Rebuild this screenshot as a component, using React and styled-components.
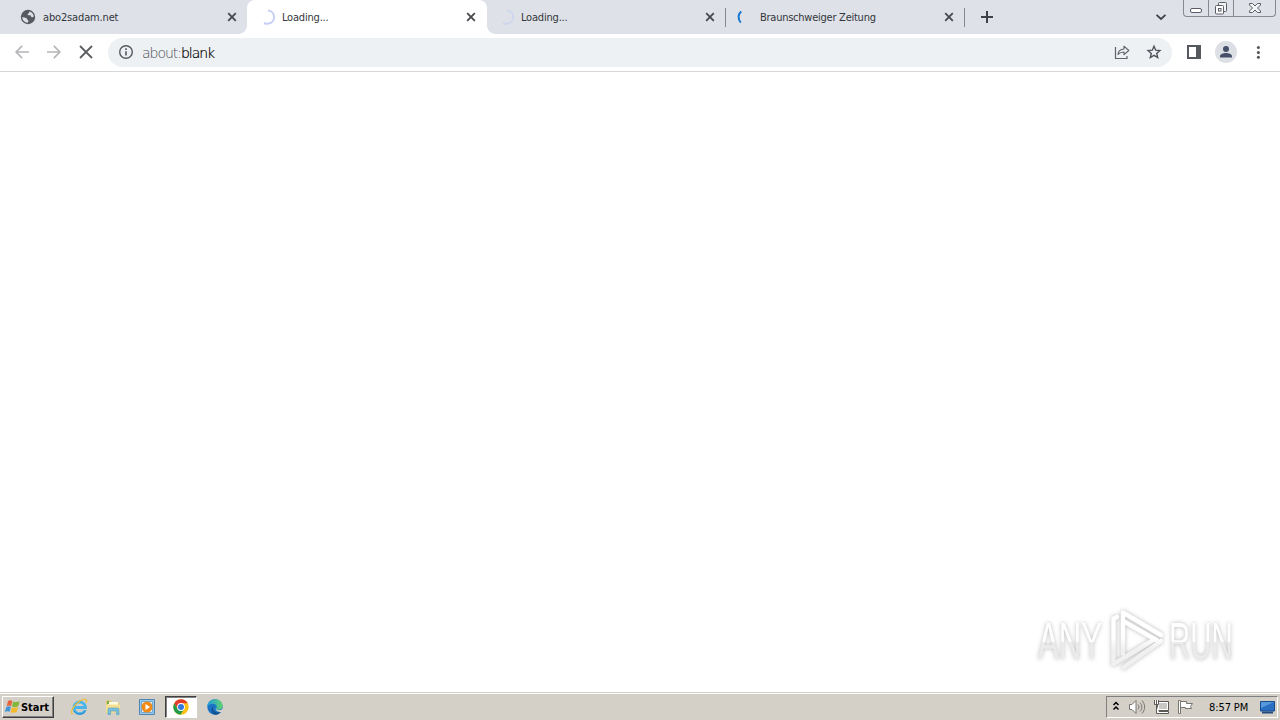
import React from 'react';
import styled, { createGlobalStyle, css } from 'styled-components';

const GlobalStyle = createGlobalStyle`
    * {
        box-sizing: border-box;
    }

    body {
        margin: 0;
        overflow: hidden;
        font-family: "DejaVu Sans Condensed", "DejaVu Sans", sans-serif;
    }

    svg {
        display: block;
        flex: none;
    }
`;

const Desktop = styled.div`
    display: flex;
    flex-direction: column;
    width: 1280px;
    height: 720px;
    background: #fff;
`;

const TabStrip = styled.div`
    display: flex;
    height: 34px;
    padding-left: 8px;
    background: #dee1e8;
`;

const Tab = styled.div`
    position: relative;
    display: flex;
    align-items: center;
    width: 239px;
    height: 34px;
    padding: 0 9px 0 12px;
    color: #33363a;

    ${({ $active }) => $active && css`
        background: #fff;
        border-radius: 8px 8px 0 0;
        width: 240px;
        margin-right: -1px;
        padding-right: 10px;

        &::before,
        &::after {
            content: "";
            position: absolute;
            bottom: 0;
            width: 8px;
            height: 8px;
        }

        &::before {
            left: -8px;
            background: radial-gradient(circle at 0 0, #dee1e8 7.5px, #fff 8px);
        }

        &::after {
            right: -8px;
            background: radial-gradient(circle at 100% 0, #dee1e8 7.5px, #fff 8px);
        }
    `}

    ${({ $divided }) => $divided && css`
        &::after {
            content: "";
            position: absolute;
            right: -1px;
            top: 8px;
            width: 1px;
            height: 19px;
            background: #858890;
        }
    `}
`;

const TabTitle = styled.span`
    flex: 1;
    margin-left: 7px;
    padding-top: 1px;
    font-size: 11px;
    line-height: 16px;
    letter-spacing: ${({ $spacing }) => $spacing || 0}px;
    white-space: nowrap;
`;

const NewTab = styled.div`
    display: flex;
    align-items: center;
    margin-left: 16px;
`;

const StripEnd = styled.div`
    display: flex;
    margin-left: auto;
    padding-right: 4px;
`;

const TabSearch = styled.div`
    display: flex;
    align-items: center;
    margin-right: 16px;
`;

const WindowButtons = styled.div`
    display: flex;
    width: 93px;
    height: 17px;
    border: 1px solid #858991;
    border-top: 0;
    border-radius: 0 0 4px 4px;
`;

const WindowButton = styled.div`
    display: flex;
    justify-content: center;
    width: ${({ $width }) => $width}px;
    height: 16px;

    & + & {
        border-left: 1px solid #858991;
    }
`;

const Toolbar = styled.div`
    display: flex;
    align-items: center;
    height: 38px;
    padding: 0 12px 1px 12px;
    background: #fff;
    border-bottom: 1px solid #d5d7d9;
`;

const NavButtons = styled.div`
    display: flex;
    gap: 12px;
    width: 96px;
`;

const Omnibox = styled.div`
    display: flex;
    align-items: center;
    width: 1064px;
    height: 29px;
    padding: 0 8px;
    border-radius: 15px;
    background: #eef1f4;
`;

const Address = styled.div`
    flex: 1;
    margin-left: 6px;
    padding-top: 1px;
    font-family: "DejaVu Sans Light", "DejaVu Sans", sans-serif;
    font-weight: 200;
    font-size: 14px;
    line-height: 20px;
    letter-spacing: -1.03px;
    color: #4c5054;
`;

const Host = styled.span`
    color: #000;
    -webkit-text-stroke: 0.2px #000;
`;

const OmniActions = styled.div`
    display: flex;
    gap: 12px;
`;

const ToolbarActions = styled.div`
    display: flex;
    align-items: center;
    gap: 11px;
    margin-left: 12px;
`;

const Page = styled.div`
    position: relative;
    flex: 1;
    background: #fff;
`;

const Watermark = styled.div`
    position: absolute;
    left: 1038px;
    top: 536px;
    display: flex;
    align-items: center;
    height: 66px;
    filter: drop-shadow(0 0 2px rgba(0, 0, 0, 0.28));
`;

const WatermarkSlot = styled.div`
    width: ${({ $width }) => $width}px;
    height: 66px;
`;

const WatermarkWord = styled.span`
    display: inline-block;
    font-family: "Liberation Sans", sans-serif;
    font-size: 52px;
    line-height: 66px;
    white-space: nowrap;
    transform: scaleX(${({ $scale }) => $scale});
    transform-origin: 0 50%;
    background: linear-gradient(#fff 52%, #ebebeb 52%);
    background-clip: text;
    -webkit-background-clip: text;
    color: transparent;
`;

const Taskbar = styled.div`
    display: flex;
    align-items: center;
    height: 28px;
    padding: 2px 2px 1px;
    background: #d4d0c8;
    border-top: 1px solid #d4d0c8;
    box-shadow: inset 0 1px #fff;
`;

const StartButton = styled.div`
    display: flex;
    align-items: center;
    width: 52px;
    height: 22px;
    padding-left: 1px;
    border: 1px solid;
    border-color: #fff #404040 #404040 #fff;
    box-shadow: inset -1px -1px #808080;
    font-size: 11px;
    font-weight: bold;
    letter-spacing: -0.05px;
    color: #000;
`;

const QuickLaunch = styled.div`
    display: flex;
    align-items: center;
    margin-left: 9px;
    gap: 2px;
`;

const LaunchItem = styled.div`
    display: flex;
    align-items: center;
    justify-content: center;
    width: 32px;
    height: 22px;
    border: 1px solid transparent;

    ${({ $pressed }) => $pressed && css`
        background: #fff;
        border-color: #404040 #fff #fff #404040;
        box-shadow: inset 1px 1px #808080;
    `}
`;

const Tray = styled.div`
    display: flex;
    align-items: center;
    width: 172px;
    height: 22px;
    margin-left: auto;
    padding: 0 1px 0 5px;
    border: 1px solid;
    border-color: #808080 #fff #fff #808080;
`;

const TrayIcons = styled.div`
    display: flex;
    align-items: center;
    gap: 7px;

    svg:first-child {
        margin-right: 1px;
    }
`;

const Clock = styled.span`
    margin-left: 15px;
    font-size: 11px;
    letter-spacing: -0.1px;
    white-space: nowrap;
    color: #000;
`;

const ShowDesktop = styled.div`
    margin-left: auto;
`;

const CloseIcon = () => (
    <svg width="12" height="12" viewBox="0 0 12 12">
        <path d="M2.2 2.2l7.6 7.6M9.8 2.2L2.2 9.8" stroke="#45484d" strokeWidth="1.8" />
    </svg>
);

const GlobeIcon = () => (
    <svg width="16" height="16" viewBox="0 0 16 16">
        <circle cx="8" cy="8" r="7.2" fill="#565a60" />
        <path d="M2.2 8.3c1.6-.1 3.2.2 4.3 1 .8.5.6 1.4 1.4 1.7.7.3.5 1.6.1 2.7-3.2 0-5.8-2.4-5.8-5.4zM9.5 2.4c2.5.6 4.2 2.7 4.3 5.2-.8.7-1.7.9-2.4.3-.6-.6-.3-1.5-1.2-1.7-1-.2-2.3.5-2.6-.6-.2-.8.7-.9 1.2-1.4.4-.5.1-1.3.7-1.8z" fill="#dee1e8" />
    </svg>
);

const Spinner = ({ path, color, width }) => (
    <svg width="16" height="16" viewBox="0 0 16 16">
        <path d={path} fill="none" stroke={color} strokeWidth={width} />
    </svg>
);

const TABS = [
    { title: 'abo2sadam.net', spacing: -0.15, icon: <GlobeIcon /> },
    {
        title: 'Loading...',
        spacing: -0.2,
        active: true,
        icon: <Spinner path="M9 1.5A6.6 6.6 0 0 1 9.500 14.600a7 7 0 0 1-4.500-.6" color="#c6cff5" width="2" />,
    },
    {
        title: 'Loading...',
        spacing: -0.2,
        divided: true,
        icon: <Spinner path="M9 1.5A6.6 6.6 0 0 1 9.500 14.600a7 7 0 0 1-4.500-.6" color="#ccd6ef" width="1.8" />,
    },
    {
        title: 'Braunschweiger Zeitung',
        spacing: -0.25,
        divided: true,
        icon: <Spinner path="M4.3 2.5C.8 5 .8 10.5 3.8 13.6" color="#1a78cc" width="2" />,
    },
];

const PlayMark = () => (
    <svg width="65" height="66" viewBox="0 0 65 66">
        <defs>
            <linearGradient id="shade" x1="0" y1="0" x2="0" y2="66" gradientUnits="userSpaceOnUse">
                <stop offset=".45" stopColor="#fff" />
                <stop offset=".62" stopColor="#f0f0f0" />
            </linearGradient>
        </defs>
        <g fill="none" stroke="url(#shade)" strokeWidth="4.4" strokeLinejoin="round" strokeLinecap="round">
            <path d="M19 46V4.500L57 27" />
            <path d="M13 9l-3.500 1.500V56L51 31" />
            <path d="M20 13.500l33 19" />
            <path d="M57 33L19.500 59.500" />
        </g>
    </svg>
);

export default function App() {
    return (
        <Desktop>
            <GlobalStyle />
            <TabStrip>
                {TABS.map((tab, i) => (
                    <Tab key={i} $active={tab.active} $divided={tab.divided}>
                        {tab.icon}
                        <TabTitle $spacing={tab.spacing}>{tab.title}</TabTitle>
                        <CloseIcon />
                    </Tab>
                ))}
                <NewTab>
                    <svg width="14" height="14" viewBox="0 0 14 14">
                        <path d="M7 1v12M1 7h12" stroke="#3f4247" strokeWidth="2" />
                    </svg>
                </NewTab>
                <StripEnd>
                    <TabSearch>
                        <svg width="12" height="12" viewBox="0 0 12 12">
                            <path d="M1.5 3.8L6 8l4.5-4.2" fill="none" stroke="#3f4247" strokeWidth="1.8" />
                        </svg>
                    </TabSearch>
                    <WindowButtons>
                        <WindowButton $width={24}>
                            <svg width="14" height="16" viewBox="0 0 14 16">
                                <rect x="1.5" y="8.5" width="11" height="4" rx="1.5" fill="#fff" stroke="#5b5e66" />
                            </svg>
                        </WindowButton>
                        <WindowButton $width={25}>
                            <svg width="14" height="16" viewBox="0 0 14 16">
                                <rect x="4.5" y="2.5" width="8" height="9" rx="1" fill="#f2f3f5" stroke="#5b5e66" />
                                <rect x="1.5" y="5.5" width="8" height="8.5" rx="1" fill="#fff" stroke="#5b5e66" />
                                <rect x="4.5" y="8.5" width="2.5" height="2.5" fill="none" stroke="#5b5e66" />
                            </svg>
                        </WindowButton>
                        <WindowButton $width={42}>
                            <svg width="14" height="16" viewBox="0 0 14 16">
                                <path d="M1.5 3.5h3L7 6l2.5-2.5h3V5L9.5 8l3 3v1.5h-3L7 10l-2.5 2.5h-3V11l3-3-3-3z" fill="#f5f6f8" stroke="#5b5e66" strokeLinejoin="round" />
                            </svg>
                        </WindowButton>
                    </WindowButtons>
                </StripEnd>
            </TabStrip>

            <Toolbar>
                <NavButtons>
                    <svg width="20" height="20" viewBox="0 0 20 20">
                        <path d="M17 10H4.2M10.2 3.9L4.1 10l6.1 6.1" fill="none" stroke="#b4b5b7" strokeWidth="1.6" />
                    </svg>
                    <svg width="20" height="20" viewBox="0 0 20 20">
                        <path d="M3 10h12.8M9.8 3.9l6.1 6.1-6.1 6.1" fill="none" stroke="#b4b5b7" strokeWidth="1.6" />
                    </svg>
                    <svg width="20" height="20" viewBox="0 0 20 20">
                        <path d="M4 4l12 12M16 4L4 16" stroke="#5c5e61" strokeWidth="1.8" />
                    </svg>
                </NavButtons>
                <Omnibox>
                    <svg width="20" height="20" viewBox="0 0 20 20">
                        <circle cx="10" cy="10" r="6.3" fill="none" stroke="#56595d" strokeWidth="1.4" />
                        <path d="M10 9.2v4.3M10 6.3v1.6" stroke="#56595d" strokeWidth="1.6" />
                    </svg>
                    <Address>about:<Host>blank</Host></Address>
                    <OmniActions>
                        <svg width="20" height="20" viewBox="0 0 20 20">
                            <path d="M3.5 5v11.500h11.500V14" fill="none" stroke="#5f6368" strokeWidth="1.2" />
                            <path d="M6 12.500c.3-3.500 2.300-5.300 6-5.500V4.200L16.800 8.500 12 12.700V10c-2.700 0-4.500.8-6 2.500z" fill="none" stroke="#5f6368" strokeWidth="1.1" strokeLinejoin="round" />
                        </svg>
                        <svg width="20" height="20" viewBox="0 0 20 20">
                            <path d="M10 4.300l1.700 3.900 4.200.4-3.200 2.800 1 4.100-3.700-2.200-3.700 2.200 1-4.100-3.200-2.800 4.200-.4z" fill="none" stroke="#505459" strokeWidth="1.4" />
                        </svg>
                    </OmniActions>
                </Omnibox>
                <ToolbarActions>
                    <svg width="20" height="20" viewBox="0 0 20 20">
                        <path d="M4 4h12v12H4z" fill="#fff" stroke="#55585c" strokeWidth="2" />
                        <path d="M12 3h5v14h-5z" fill="#55585c" />
                    </svg>
                    <svg width="22" height="22" viewBox="0 0 22 22">
                        <circle cx="11" cy="11" r="11" fill="#dcdfe4" />
                        <circle cx="11" cy="8" r="3" fill="#46506a" />
                        <path d="M5 16.500v-1.200c0-2 3.500-3.200 6-3.200s6 1.200 6 3.200v1.200z" fill="#46506a" />
                    </svg>
                    <svg width="20" height="20" viewBox="0 0 20 20">
                        <circle cx="10.4" cy="5.6" r="1.5" fill="#505357" />
                        <circle cx="10.4" cy="10.4" r="1.5" fill="#505357" />
                        <circle cx="10.4" cy="15.2" r="1.5" fill="#505357" />
                    </svg>
                </ToolbarActions>
            </Toolbar>

            <Page>
                <Watermark>
                    <WatermarkSlot $width={66}>
                        <WatermarkWord $scale={0.6}>ANY</WatermarkWord>
                    </WatermarkSlot>
                    <PlayMark />
                    <WatermarkSlot $width={66}>
                        <WatermarkWord $scale={0.565}>RUN</WatermarkWord>
                    </WatermarkSlot>
                </Watermark>
            </Page>

            <Taskbar>
                <StartButton>
                    <svg width="17" height="16" viewBox="0 0 17 16">
                        <path d="M4 2c1.600-1 3-.9 4.300 0L7.200 7c-1.400-.8-2.900-.8-4.400 0z" fill="#e5623a" />
                        <path d="M9.100 2.500c1.600.8 3.600.9 6.500-.2L14.300 7.300c-2 1-4.500 1-6.200.1z" fill="#83b63a" />
                        <path d="M2.500 7.800c1.500-.9 3-.8 4.400 0L5.700 12.800c-1.400-.8-2.900-.8-4.900 0z" fill="#4296d7" />
                        <path d="M7.800 8.200c1.700.9 3.800.8 6.200-.1l-1.200 5c-2 1-4.500 1-6.100.1z" fill="#f5b92e" />
                    </svg>
                    Start
                </StartButton>
                <QuickLaunch>
                    <LaunchItem>
                        <svg width="18" height="18" viewBox="0 0 18 18">
                            <path d="M15 12.200A5.800 5.800 0 1 1 15.500 9.500H5" fill="none" stroke="#4ab5ea" strokeWidth="2.8" />
                            <path d="M15.800 12.500A6.800 6.800 0 0 1 4 13" fill="none" stroke="#2585c8" strokeWidth="1" />
                            <path d="M2.500 16.300C-1 13 8.500 1 15 1.300c2 .1 1.800 2 1.200 3.300" fill="none" stroke="#edbd35" strokeWidth="1.3" />
                        </svg>
                    </LaunchItem>
                    <LaunchItem>
                        <svg width="18" height="18" viewBox="0 0 18 18">
                            <path d="M2 2.500h5l1 2h7v10H2z" fill="#e8c866" />
                            <path d="M4 4h10v5H4z" fill="#fffbe0" />
                            <path d="M2 6.500h14v8H2z" fill="#f5df92" />
                            <path d="M4 16.500v-5c0-1 .5-1.500 1.500-1.500h8c1 0 1.500.5 1.500 1.500v5h-2.500V13h-6v3.500z" fill="#79c0df" stroke="#4b9dc2" strokeWidth=".6" />
                            <path d="M3 3h2v3H3z" fill="#7aab4b" />
                        </svg>
                    </LaunchItem>
                    <LaunchItem>
                        <svg width="18" height="18" viewBox="0 0 18 18">
                            <path d="M1.500 1.500h15v15h-15z" fill="#9cc9eb" stroke="#4d86b5" />
                            <path d="M3.500 3.500h11v11h-11z" fill="#dcebf7" stroke="#6fa9d4" />
                            <circle cx="9" cy="9" r="5.5" fill="#f38a16" />
                            <path d="M7.500 6v6l4.500-3z" fill="#fff" />
                        </svg>
                    </LaunchItem>
                    <LaunchItem $pressed>
                        <svg width="16" height="16" viewBox="0 0 16 16">
                            <circle cx="8" cy="8" r="7.7" fill="#fbc116" />
                            <path d="M1.300 4.200A7.700 7.700 0 0 1 14.700 4.200H8L4.700 10z" fill="#e33b2e" />
                            <path d="M1.300 4.200A7.700 7.700 0 0 0 7.400 15.700L11.200 10H4.700z" fill="#269b47" />
                            <circle cx="8" cy="8" r="3.9" fill="#fff" />
                            <circle cx="8" cy="8" r="3" fill="#3579df" />
                        </svg>
                    </LaunchItem>
                    <LaunchItem>
                        <svg width="16" height="16" viewBox="0 0 16 16">
                            <defs>
                                <linearGradient id="edgeTop" x1="0" y1="0" x2="1" y2="0">
                                    <stop stopColor="#219bdf" />
                                    <stop offset="1" stopColor="#5fd36d" />
                                </linearGradient>
                            </defs>
                            <circle cx="8" cy="8" r="7.7" fill="#1a73c5" />
                            <path d="M.3 8C.3 3.500 3.800.3 8 .3c4.500 0 7.700 3.100 7.700 6.400 0 2.500-2 4-4.200 4-1.700 0-2.500-.5-2.500-1 0-.6.7-.8.7-2C9.700 6 8 4.700 5.800 4.700 3 4.700.8 6.500.3 8z" fill="url(#edgeTop)" />
                            <path d="M6.300 7.200c-2.100 3.800 2 7.700 7.500 5.700-1 1.400-2.700 2.500-4.800 2.800-4.300-.4-6.500-5.300-2.700-8.500z" fill="#12518f" />
                            <path d="M9 7.500c-1.300 1.800.3 3.700 3 3.700 1.600 0 2.800-.6 3.800-1.700v3.200c-4 1.200-8.800-1.200-6.800-5.200z" fill="#d4d0c8" />
                        </svg>
                    </LaunchItem>
                </QuickLaunch>

                <Tray>
                    <TrayIcons>
                        <svg width="8" height="14" viewBox="0 0 8 14">
                            <path d="M1.500 5L4 2.500 6.500 5M1.500 9.500L4 7l2.500 2.500" fill="none" stroke="#000" strokeWidth="1.5" />
                        </svg>
                        <svg width="18" height="16" viewBox="0 0 18 16">
                            <path d="M1.500 5.500H4L8 1.500v13L4 10.500H1.500z" fill="#fff" stroke="#77756f" strokeLinejoin="round" />
                            <path d="M10 5.500c1.300 1.500 1.300 3.500 0 5M12 3.500c2.500 2.700 2.500 6.300 0 9M14 1.500c3.500 4 3.500 9 0 13" fill="none" stroke="#77756f" />
                        </svg>
                        <svg width="17" height="16" viewBox="0 0 17 16">
                            <path d="M4.500 2.500h11v9h-11z" fill="#c8c7c3" stroke="#5c5b58" />
                            <path d="M5.500 3.500h9v7h-9z" fill="none" stroke="#fff" />
                            <path d="M5.500 12.500h10v2h-10z" fill="#fff" stroke="#5c5b58" />
                            <path d="M1.500 1v4.500h4V1M3.500 1v4M3.500 6v8.500h3" fill="#fff" stroke="#5c5b58" />
                        </svg>
                        <svg width="17" height="16" viewBox="0 0 17 16">
                            <path d="M1.500 1.500h2v13h-2z" fill="#fff" stroke="#77756f" />
                            <path d="M3.500 2.500h6v2h6l-2 3 1 2H8.500v-1h-5z" fill="#fff" stroke="#77756f" />
                        </svg>
                    </TrayIcons>
                    <Clock>8:57 PM</Clock>
                    <ShowDesktop>
                        <svg width="17" height="16" viewBox="0 0 17 16">
                            <path d="M1.500 2.500h14V12h-14z" fill="#286fc2" stroke="#184a8e" />
                            <path d="M2 3h13L2 9z" fill="#5797dc" />
                            <path d="M3 12.500h11v2H3z" fill="#254a80" />
                        </svg>
                    </ShowDesktop>
                </Tray>
            </Taskbar>
        </Desktop>
    );
}
